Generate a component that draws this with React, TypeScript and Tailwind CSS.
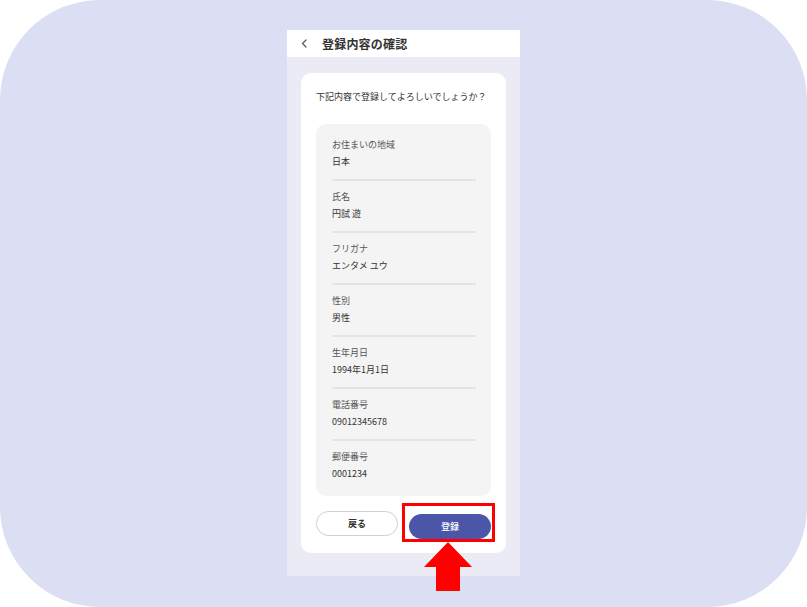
import React from "react";

type Field = { label: string; value: string };

const fields: Field[] = [
  { label: "お住まいの地域", value: "日本" },
  { label: "氏名", value: "円試 遊" },
  { label: "フリガナ", value: "エンタメ ユウ" },
  { label: "性別", value: "男性" },
  { label: "生年月日", value: "1994年1月1日" },
  { label: "電話番号", value: "09012345678" },
  { label: "郵便番号", value: "0001234" },
];

const font = { fontFamily: '"Noto Sans CJK JP", "Noto Sans", sans-serif' };

const FieldRow = ({ field, last }: { field: Field; last: boolean }) => (
  <div className={last ? "pt-[9px] pb-[11px]" : "pt-[9px] pb-[10px] border-b-2 border-[#e3e3e3]"}>
    <p className="text-[9px] leading-[14px] text-[#555]">{field.label}</p>
    <p className="mt-[3px] text-[9px] leading-[14px] text-[#333]">{field.value}</p>
  </div>
);

export default function App() {
  return (
    <div className="w-[807px] h-[607px] bg-white" style={font}>
      <div className="w-[807px] h-[607px] rounded-[100px] bg-[#dcdff3] flex justify-center pt-[30px]">
        <div className="w-[233px] h-[546px] bg-[#ebebf6] flex flex-col">
          <div className="h-[27px] bg-white flex items-center pl-[14px] gap-[14px] shrink-0">
            <svg width="7" height="9" viewBox="0 0 7 9" fill="none">
              <polyline points="5,1 1.5,4.5 5,8" stroke="#555" strokeWidth="1.2" strokeLinecap="round" strokeLinejoin="round" />
            </svg>
            <h1 className="text-[12px] font-bold text-[#333] tracking-[0.2px]">登録内容の確認</h1>
          </div>

          <div className="px-[14px] pt-[16px]">
            <div className="bg-white rounded-[10px] px-[15px] pt-[18px] pb-[14px]">
              <p className="text-[9px] leading-[12px] text-[#333]">下記内容で登録してよろしいでしょうか？</p>

              <div className="mt-[21px] bg-[#f4f4f4] rounded-[10px] pl-[16px] pr-[15px] pt-[5px] pb-[4px]">
                {fields.map((f, i) => (
                  <FieldRow key={f.label} field={f} last={i === fields.length - 1} />
                ))}
              </div>

              <div className="mt-[15px] flex gap-[11px]">
                <button className="w-[82px] h-[25px] rounded-full border border-[#cfcfcf] bg-white text-[9px] font-bold text-[#333]">
                  戻る
                </button>
                <div className="relative">
                  <button className="w-[82px] h-[25px] rounded-full bg-[#4c56a8] text-[9px] font-medium text-white">
                    登録
                  </button>
                  <div className="absolute left-[-7px] top-[-8px] w-[93px] h-[39px] border-[3px] border-[#ff0000]" />
                  <svg
                    className="absolute left-[15px] top-[31px]"
                    width="48"
                    height="49"
                    viewBox="0 0 48 49"
                  >
                    <polygon points="24,0 48,25 36,25 36,49 12,49 12,25 0,25" fill="#ff0000" />
                  </svg>
                </div>
              </div>
            </div>
          </div>
        </div>
      </div>
    </div>
  );
}
